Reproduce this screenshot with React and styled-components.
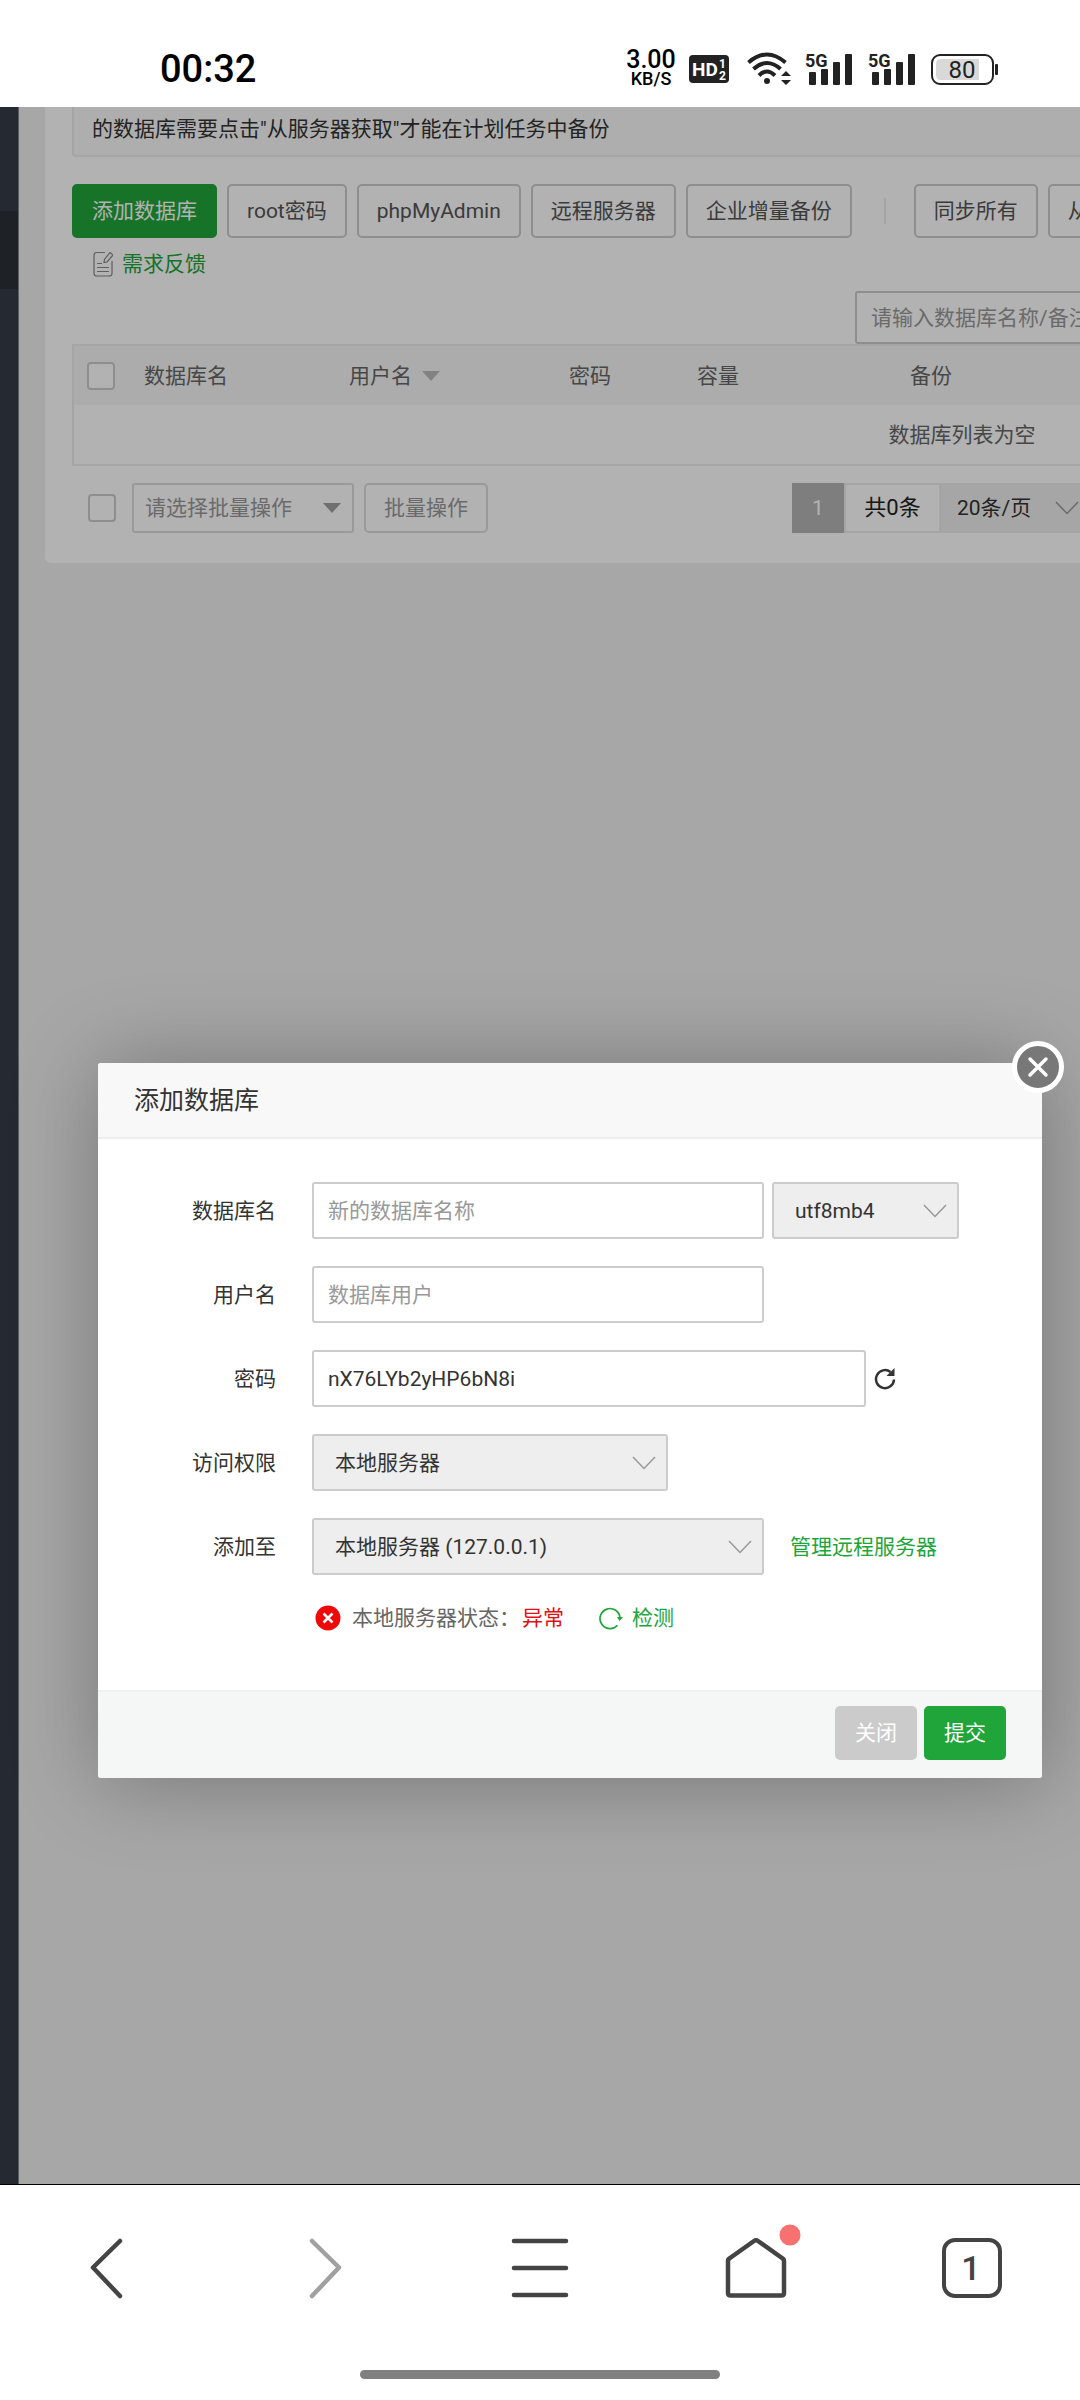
import React, { useState } from "react";
import styled, { createGlobalStyle } from "styled-components";

const green = "#20a53a";
const line = "#ccc";
const text = "#333";

const GlobalStyle = createGlobalStyle`
  *, *::before, *::after {
    box-sizing: border-box;
  }

  body {
    margin: 0;
    background: #fff;
    color: ${text};
    font-family: Roboto, "Noto Sans CJK SC", sans-serif;
    font-size: 21px;
    line-height: 24px;
  }

  button, input, select {
    margin: 0;
    font: inherit;
  }
`;

const Screen = styled.div`
  display: flex;
  flex-direction: column;
  min-height: 100vh;
`;

/* phone status bar */

const StatusBar = styled.header`
  display: flex;
  align-items: center;
  justify-content: space-between;
  height: 107px;
  padding: 30px 82px 0 160px;
  color: #000;
`;

const Clock = styled.time`
  font-size: 38px;
  font-weight: 500;
  line-height: 40px;
`;

const StatusIcons = styled.div`
  display: flex;
  align-items: center;
  gap: 14px;

  svg {
    display: block;
  }
`;

const NetSpeed = styled.div`
  display: flex;
  flex-direction: column;
  align-items: center;
  width: 48px;
  font-size: 25px;
  font-weight: 500;
  line-height: 20px;
`;

const NetUnit = styled.span`
  font-size: 18px;
  line-height: 18px;
`;

/* web page under the dialog */

const Page = styled.main`
  position: relative;
  display: flex;
  flex: 1;
  overflow: hidden;
  background: #f0f0f0;
`;

const Sidebar = styled.aside`
  flex: none;
  width: 19px;
  padding-top: 104px;
  border-right: 1px solid #85878a;
  background: #363c47;
`;

const SidebarCurrent = styled.div`
  height: 78px;
  background: #2c3036;
`;

const Panel = styled.section`
  flex: 1;
  align-self: flex-start;
  min-width: 0;
  margin-left: 26px;
  padding: 0 0 30px 27px;
  overflow: hidden;
  border-bottom-left-radius: 6px;
  background: #fff;
`;

const Notice = styled.p`
  margin: 0 0 27px;
  padding: 10px 18px 14px;
  border: 2px solid #ececec;
  border-width: 0 0 2px 2px;
  border-bottom-left-radius: 4px;
  background: #f9f9f9;
`;

const Toolbar = styled.div`
  display: flex;
  gap: 10px;
`;

const Button = styled.button`
  flex: none;
  height: ${(props) => (props.$small ? 50 : 54)}px;
  padding: 0 18px;
  border: 2px solid ${line};
  border-radius: 5px;
  background: #fff;
  color: #555;
  white-space: nowrap;

  &:disabled {
    border-color: #ddd;
    color: #999;
  }
`;

const GreenButton = styled(Button)`
  border-color: ${green};
  background: ${green};
  color: #fff;
`;

const GreyButton = styled(Button)`
  border-color: #cbcbcb;
  background: #cbcbcb;
  color: #fff;
`;

const Divider = styled.span`
  flex: none;
  align-self: center;
  width: 2px;
  height: 26px;
  margin: 0 18px 0 22px;
  background: #ececec;
`;

const Feedback = styled.a`
  display: flex;
  align-items: center;
  gap: 9px;
  width: max-content;
  margin: 13px 0 0 21px;
  color: ${green};
  text-decoration: none;
`;

const SearchRow = styled.div`
  display: flex;
  margin-top: 14px;
  padding-left: 783px;
`;

const Input = styled.input`
  flex: none;
  width: ${(props) => props.$width}px;
  height: 57px;
  padding: 0 14px;
  border: 2px solid ${line};
  border-radius: 3px;
  outline: none;
  background: #fff;
  color: ${text};

  &::placeholder {
    color: #999;
    opacity: 1;
  }
`;

const SearchInput = styled(Input)`
  height: 53px;
`;

const Table = styled.table`
  width: 1780px;
  table-layout: fixed;
  border: 2px solid #ececec;
  border-spacing: 0;
  color: #666;

  th, td {
    height: 59px;
    padding: 0;
    font-weight: 400;
    text-align: center;
  }

  th {
    padding-left: 13px;
    background: #f7f7f7;
    text-align: left;
  }
`;

const Sorter = styled.span`
  display: flex;
  align-items: center;
  gap: 10px;
`;

const Caret = styled.span`
  width: 0;
  height: 0;
  border: 9px solid transparent;
  border-top: 10px solid ${(props) => props.$color};
  border-bottom: 0;
`;

const Checkbox = styled.input`
  display: block;
  flex: none;
  width: 28px;
  height: 28px;
  margin: 0;
  appearance: none;
  border: 2px solid ${line};
  border-radius: 4px;
  background: #fff;

  &:checked {
    background: ${green};
  }
`;

const TableFooter = styled.div`
  display: flex;
  align-items: center;
  gap: 10px;
  margin-top: 17px;
  padding-left: 16px;
`;

const BatchField = styled.div`
  display: grid;
  flex: none;
  align-items: center;
  width: 222px;
  margin-left: 6px;

  > * {
    grid-area: 1 / 1;
  }

  ${Caret} {
    justify-self: end;
    margin-right: 13px;
    pointer-events: none;
  }
`;

const BatchSelect = styled.select`
  width: 100%;
  height: 50px;
  padding: 0 11px;
  appearance: none;
  border: 2px solid #ddd;
  border-radius: 3px;
  background: #fff;
  color: #999;
`;

const Pager = styled.div`
  display: flex;
  flex: none;
  height: 50px;
  margin-left: 294px;
`;

const PageNumber = styled.span`
  width: 52px;
  background: #b5b5b5;
  color: #fff;
  line-height: 50px;
  text-align: center;
`;

const PageTotal = styled.span`
  width: 97px;
  border: 2px solid #ececec;
  color: #222;
  font-size: 22px;
  line-height: 46px;
  text-align: center;
`;

/* dialog */

const Mask = styled.div`
  position: absolute;
  inset: 0;
  padding: 956px 38px 0 98px;
  background: rgba(0, 0, 0, 0.3);
`;

const Dialog = styled.form`
  position: relative;
  border-radius: 3px;
  background: #fff;
  box-shadow: 2px 2px 88px rgba(0, 0, 0, 0.3);
`;

const DialogTitle = styled.h2`
  margin: 0;
  padding: 25px 36px 23px;
  border-bottom: 2px solid #eee;
  border-radius: 3px 3px 0 0;
  background: #f8f8f8;
  font-size: 25px;
  font-weight: 400;
  line-height: 26px;
`;

const CloseButton = styled.button`
  position: absolute;
  top: -22px;
  right: -22px;
  width: 52px;
  height: 52px;
  padding: 0;
  border: 0;
  border-radius: 50%;
  background: none;

  svg {
    display: block;
  }
`;

const DialogBody = styled.div`
  display: flex;
  flex-direction: column;
  gap: 27px;
  padding: 43px 20px 59px 58px;
`;

const Row = styled.div`
  display: flex;
  align-items: center;
  gap: 8px;
`;

const Label = styled.label`
  flex: none;
  width: 120px;
  margin-right: 28px;
  text-align: right;
`;

const SelectField = styled.div`
  display: grid;
  flex: none;
  align-items: center;
  width: ${(props) => props.$width}px;

  > * {
    grid-area: 1 / 1;
  }

  svg {
    justify-self: end;
    margin-right: 12px;
    pointer-events: none;
  }
`;

const Select = styled.select`
  width: 100%;
  height: 57px;
  padding: 0 21px;
  appearance: none;
  border: 2px solid ${line};
  border-radius: 3px;
  outline: none;
  background: #eee;
  color: ${text};
`;

const PageSize = styled(Select)`
  height: 50px;
  padding: 0 14px;
  border-color: #ececec;
  border-radius: 0;
`;

const IconButton = styled.button`
  display: flex;
  padding: 0;
  border: 0;
  background: none;
  color: ${text};
`;

const Link = styled.a`
  display: flex;
  align-items: center;
  gap: 9px;
  margin-left: 18px;
  color: ${green};
  text-decoration: none;
`;

const ServerState = styled.div`
  display: flex;
  align-items: center;
  margin: 3px 0 0 159px;
  color: #666;

  svg {
    flex: none;
  }

  > span {
    margin-left: 11px;
  }

  ${Link} {
    margin-left: 35px;
  }
`;

const Abnormal = styled.em`
  margin-left: 2px;
  color: #e01010;
  font-style: normal;
`;

const DialogFooter = styled.footer`
  display: flex;
  justify-content: flex-end;
  gap: 7px;
  padding: 14px 36px 18px;
  border-top: 2px solid #edf1f0;
  border-radius: 0 0 3px 3px;
  background: #f5f7f6;
`;

/* browser bar */

const BrowserBar = styled.nav`
  height: 216px;
  border-top: 1px solid #000;
  background: #fff;
`;

const BrowserButtons = styled.div`
  display: grid;
  grid-template-columns: repeat(5, 1fr);
  padding-top: 38px;
`;

const BrowserButton = styled.button`
  display: flex;
  justify-content: center;
  height: 90px;
  padding: 0;
  border: 0;
  background: none;
  color: #444;

  &:disabled {
    color: #a0a0a0;
  }
`;

const HomeIndicator = styled.div`
  width: 360px;
  height: 9px;
  margin: 57px auto 0;
  border-radius: 5px;
  background: #808080;
`;

const HdIcon = () => (
  <svg width="44" height="28" fill="#fff" fontFamily="Roboto" fontWeight="700">
    <rect width="40" height="28" rx="4" fill="#222" />
    <text x="3" y="21" fontSize="19">HD</text>
    <text x="30" y="13" fontSize="12">1</text>
    <text x="30" y="25" fontSize="12">2</text>
  </svg>
);

const WifiIcon = () => (
  <svg width="44" height="34" fill="none" stroke="#222" strokeWidth="4">
    <path d="M1.500 10.500Q20-5.500 38.500 10.500" />
    <path d="M6.500 17Q20 5 33.500 17" />
    <path d="M12 23.500Q20 15.500 28 23.500" />
    <g fill="#222" stroke="none">
      <circle cx="20" cy="29" r="3" />
      <path d="M34 24l5-5 5 5zM34 28h10l-5 5z" />
    </g>
  </svg>
);

const SignalIcon = () => (
  <svg width="49" height="42" fill="#222">
    <text x="0" y="19" fontSize="18" fontWeight="700" fontFamily="Roboto">
      5G
    </text>
    <rect x="4" y="24" width="7" height="13" rx="1" />
    <rect x="16" y="21" width="7" height="16" rx="1" />
    <rect x="28" y="14" width="7" height="23" rx="1" />
    <rect x="40" y="6" width="7" height="31" rx="1" />
  </svg>
);

const BatteryIcon = () => (
  <svg width="67" height="32">
    <rect x="1" y="2" width="61" height="29" rx="8" fill="#fff" stroke="#222" strokeWidth="2" />
    <path d="M10 6h38v21H10q-5 0-5-5V11q0-5 5-5z" fill="#d9d9d9" />
    <rect x="64" y="11" width="3" height="11" rx="1" fill="#222" />
    <text x="31" y="25" fontSize="24" fontFamily="Roboto" textAnchor="middle" fill="#222">
      80
    </text>
  </svg>
);

const FeedbackIcon = () => (
  <svg width="20" height="26" fill="none" stroke="#888" strokeWidth="1.200">
    <path d="M12 1.500H4q-3 0-3 3v18q0 2.500 3 2.500h12q3 0 3-2.500V10" />
    <path d="M17 1.500l3 2.500-6 7-3 .500.500-3zM4 12.500h5M4 16.500h12M4 20.500h12" />
  </svg>
);

const Chevron = () => (
  <svg width="24" height="14" fill="none" stroke="#999" strokeWidth="1.500">
    <path d="M1 1l11 11.500L23 1" />
  </svg>
);

const RepeatIcon = () => (
  <svg width="22" height="24" fill="none" stroke="#333" strokeWidth="2.500">
    <path d="M20 12.500a9 9 0 1 1-3.500-7.500" />
    <path d="M20.500 1v8h-8z" fill="#333" stroke="none" />
  </svg>
);

const CheckAgainIcon = () => (
  <svg width="24" height="24" fill="none" stroke={green} strokeWidth="1.700">
    <path d="M18.500 19.200a10 10 0 1 1 2.500-7.200" />
    <path d="M18 11h6l-3.500 4z" fill={green} stroke="none" />
  </svg>
);

const ErrorIcon = () => (
  <svg width="26" height="26">
    <circle cx="13" cy="13" r="12.500" fill="#ef0808" />
    <path d="M8.500 8.500l9 9m0-9l-9 9" stroke="#fff" strokeWidth="2.500" />
  </svg>
);

const CloseIcon = () => (
  <svg width="52" height="52">
    <circle cx="26" cy="26" r="23.500" fill="#787878" stroke="#fff" strokeWidth="5" />
    <path d="M18 18l16 16m0-16L18 34" stroke="#fff" strokeWidth="3.500" strokeLinecap="round" />
  </svg>
);

const BrowserIcon = ({ children }) => (
  <svg
    width="90"
    height="90"
    fill="none"
    stroke="currentColor"
    strokeWidth="4.500"
    strokeLinecap="round"
    strokeLinejoin="round"
  >
    {children}
  </svg>
);

const StatusBarView = () => (
  <StatusBar>
    <Clock>00:32</Clock>
    <StatusIcons>
      <NetSpeed>
        3.00
        <NetUnit>KB/S</NetUnit>
      </NetSpeed>
      <HdIcon />
      <WifiIcon />
      <SignalIcon />
      <SignalIcon />
      <BatteryIcon />
    </StatusIcons>
  </StatusBar>
);

const DatabasePanel = () => (
  <Panel>
    <Notice>的数据库需要点击"从服务器获取"才能在计划任务中备份</Notice>
    <Toolbar>
      <GreenButton type="button">添加数据库</GreenButton>
      <Button type="button">root密码</Button>
      <Button type="button">phpMyAdmin</Button>
      <Button type="button">远程服务器</Button>
      <Button type="button">企业增量备份</Button>
      <Divider />
      <Button type="button">同步所有</Button>
      <Button type="button">从服务器获取</Button>
    </Toolbar>
    <Feedback href="#feedback">
      <FeedbackIcon />
      需求反馈
    </Feedback>
    <SearchRow>
      <SearchInput $width={400} aria-label="搜索" placeholder="请输入数据库名称/备注" />
    </SearchRow>
    <Table>
      <colgroup>
        <col width="57" />
        <col width="205" />
        <col width="220" />
        <col width="128" />
        <col width="213" />
        <col />
      </colgroup>
      <thead>
        <tr>
          <th>
            <Checkbox type="checkbox" aria-label="全选" />
          </th>
          <th>数据库名</th>
          <th>
            <Sorter>
              用户名
              <Caret $color="#bbb" />
            </Sorter>
          </th>
          <th>密码</th>
          <th>容量</th>
          <th>备份</th>
        </tr>
      </thead>
      <tbody>
        <tr>
          <td colSpan="6">数据库列表为空</td>
        </tr>
      </tbody>
    </Table>
    <TableFooter>
      <Checkbox type="checkbox" aria-label="全选" />
      <BatchField>
        <BatchSelect aria-label="批量操作">
          <option>请选择批量操作</option>
        </BatchSelect>
        <Caret $color="#a0a0a0" />
      </BatchField>
      <Button type="button" $small disabled>
        批量操作
      </Button>
      <Pager>
        <PageNumber>1</PageNumber>
        <PageTotal>共0条</PageTotal>
        <SelectField $width={150}>
          <PageSize aria-label="每页条数">
            <option>20条/页</option>
          </PageSize>
          <Chevron />
        </SelectField>
      </Pager>
    </TableFooter>
  </Panel>
);

const AddDatabaseDialog = () => {
  const [password, setPassword] = useState("nX76LYb2yHP6bN8i");

  return (
    <Dialog onSubmit={(e) => e.preventDefault()}>
      <DialogTitle>添加数据库</DialogTitle>
      <CloseButton type="button" aria-label="关闭">
        <CloseIcon />
      </CloseButton>
      <DialogBody>
        <Row>
          <Label htmlFor="db-name">数据库名</Label>
          <Input id="db-name" $width={452} placeholder="新的数据库名称" />
          <SelectField $width={187}>
            <Select aria-label="编码">
              <option>utf8mb4</option>
            </Select>
            <Chevron />
          </SelectField>
        </Row>
        <Row>
          <Label htmlFor="db-user">用户名</Label>
          <Input id="db-user" $width={452} placeholder="数据库用户" />
        </Row>
        <Row>
          <Label htmlFor="db-password">密码</Label>
          <Input
            id="db-password"
            $width={554}
            value={password}
            onChange={(e) => setPassword(e.target.value)}
          />
          <IconButton type="button" aria-label="随机密码">
            <RepeatIcon />
          </IconButton>
        </Row>
        <Row>
          <Label htmlFor="db-access">访问权限</Label>
          <SelectField $width={356}>
            <Select id="db-access">
              <option>本地服务器</option>
            </Select>
            <Chevron />
          </SelectField>
        </Row>
        <Row>
          <Label htmlFor="db-server">添加至</Label>
          <SelectField $width={452}>
            <Select id="db-server">
              <option>本地服务器 (127.0.0.1)</option>
            </Select>
            <Chevron />
          </SelectField>
          <Link href="#servers">管理远程服务器</Link>
        </Row>
        <ServerState>
          <ErrorIcon />
          <span>本地服务器状态：</span>
          <Abnormal>异常</Abnormal>
          <Link href="#check">
            <CheckAgainIcon />
            检测
          </Link>
        </ServerState>
      </DialogBody>
      <DialogFooter>
        <GreyButton type="button">关闭</GreyButton>
        <GreenButton type="submit">提交</GreenButton>
      </DialogFooter>
    </Dialog>
  );
};

const BrowserBarView = () => (
  <BrowserBar>
    <BrowserButtons>
      <BrowserButton type="button" aria-label="后退">
        <BrowserIcon>
          <path d="M57 18L30 44.500 57 73" />
        </BrowserIcon>
      </BrowserButton>
      <BrowserButton type="button" aria-label="前进" disabled>
        <BrowserIcon>
          <path d="M33 18l27 26.500L33 73" />
        </BrowserIcon>
      </BrowserButton>
      <BrowserButton type="button" aria-label="菜单">
        <BrowserIcon>
          <path d="M19 18h52M19 45h52M19 72h52" />
        </BrowserIcon>
      </BrowserButton>
      <BrowserButton type="button" aria-label="主页">
        <BrowserIcon>
          <path d="M17 70V38q0-2 2-3L43 18q2-1.500 4 0L71 35q2 1 2 3V70q0 2.500-2.500 2.500H19.500Q17 72.500 17 70z" />
          <circle cx="79" cy="12" r="10.500" fill="#f87171" stroke="none" />
        </BrowserIcon>
      </BrowserButton>
      <BrowserButton type="button" aria-label="标签页">
        <BrowserIcon>
          <rect x="17" y="17" width="56" height="56" rx="11" strokeWidth="4" />
          <text
            x="44"
            y="57"
            textAnchor="middle"
            fill="currentColor"
            stroke="none"
            fontFamily="Roboto"
            fontSize="34"
            fontWeight="500"
          >
            1
          </text>
        </BrowserIcon>
      </BrowserButton>
    </BrowserButtons>
    <HomeIndicator />
  </BrowserBar>
);

const App = () => (
  <Screen>
    <GlobalStyle />
    <StatusBarView />
    <Page>
      <Sidebar>
        <SidebarCurrent />
      </Sidebar>
      <DatabasePanel />
      <Mask>
        <AddDatabaseDialog />
      </Mask>
    </Page>
    <BrowserBarView />
  </Screen>
);

export default App;
